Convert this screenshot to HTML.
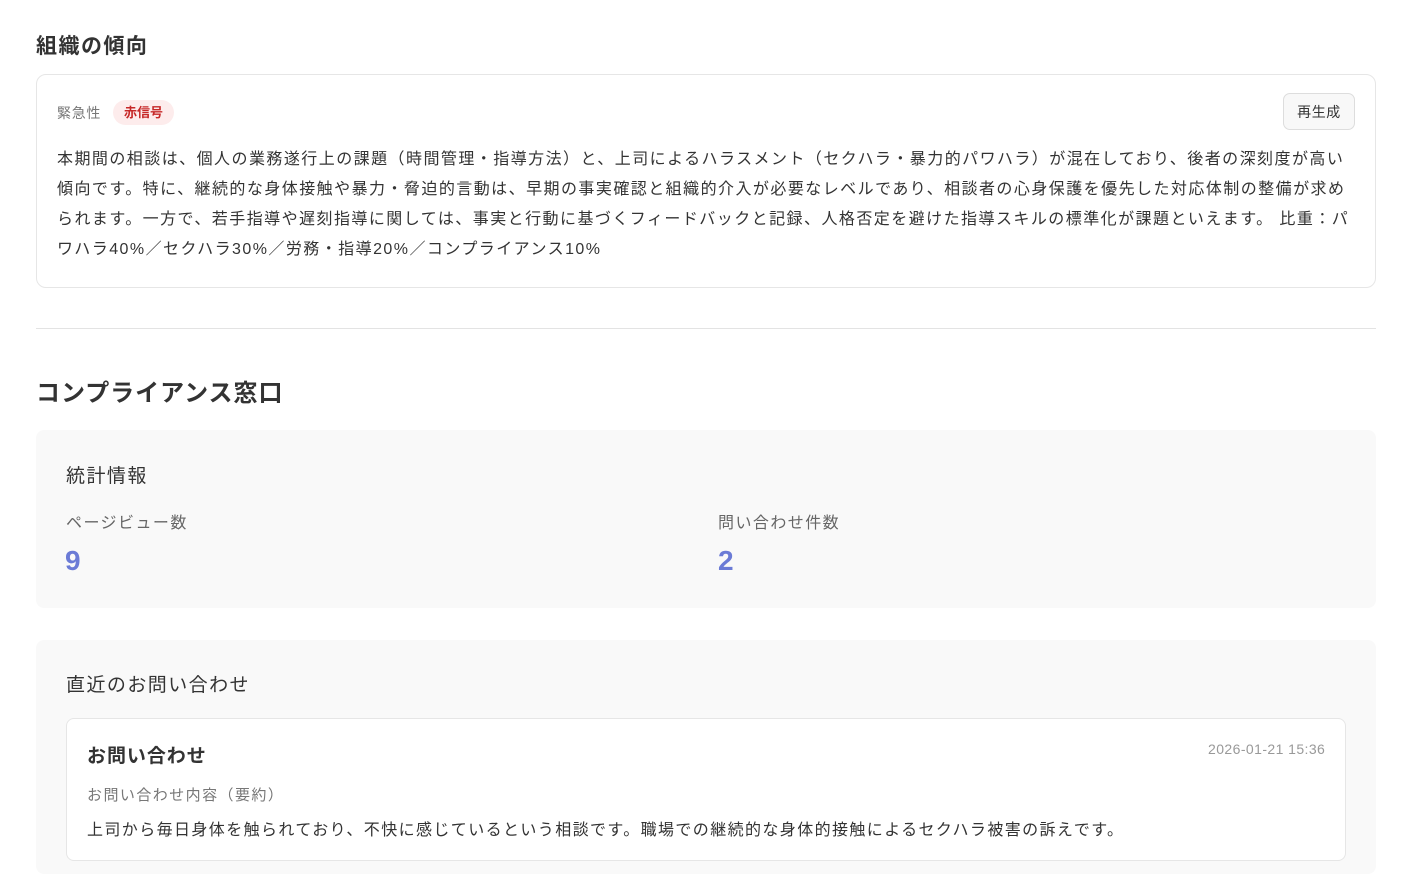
<!DOCTYPE html>
<html><head><meta charset="utf-8"><style>
*{box-sizing:border-box;margin:0;padding:0}
body{width:1406px;height:874px;overflow:hidden;background:#fff;font-family:"Liberation Sans","Noto Sans CJK JP",sans-serif;color:#333;position:relative;letter-spacing:0.09em}
.abs{position:absolute}
h2{font-size:22px;font-weight:700;color:#333}
</style></head><body>
<h2 class="abs" style="left:36px;top:30px;font-size:21px;letter-spacing:0.07em">組織の傾向</h2>
<div class="abs" style="left:36px;top:74px;width:1340px;height:214px;border:1px solid #e6e6e6;border-radius:10px"></div>
<div class="abs" style="left:57px;top:103px;font-size:14px;color:#777;letter-spacing:0.05em">緊急性</div>
<div class="abs" style="left:113px;top:100px;width:61px;height:25px;border-radius:13px;background:#fdecec;color:#c62828;font-size:13px;font-weight:700;text-align:center;line-height:25px;letter-spacing:0">赤信号</div>
<div class="abs" style="left:1283px;top:93px;width:72px;height:37px;border:1px solid #ddd;border-radius:7px;background:#f8f8f8;font-size:14px;color:#333;text-align:center;line-height:37px;letter-spacing:0.04em">再生成</div>
<div class="abs" style="left:57px;top:145px;width:1320px;font-size:16px;line-height:30px;color:#333;white-space:nowrap;letter-spacing:1.45px">本期間の相談は、個人の業務遂行上の課題（時間管理・指導方法）と、上司によるハラスメント（セクハラ・暴力的パワハラ）が混在しており、後者の深刻度が高い<br>傾向です。特に、継続的な身体接触や暴力・脅迫的言動は、早期の事実確認と組織的介入が必要なレベルであり、相談者の心身保護を優先した対応体制の整備が求め<br>られます。一方で、若手指導や遅刻指導に関しては、事実と行動に基づくフィードバックと記録、人格否定を避けた指導スキルの標準化が課題といえます。 比重：パ<br>ワハラ40%／セクハラ30%／労務・指導20%／コンプライアンス10%</div>
<div class="abs" style="left:36px;top:328px;width:1340px;height:1px;background:#e3e3e3"></div>
<h2 class="abs" style="left:36px;top:373px;font-size:24px;letter-spacing:0.04em">コンプライアンス窓口</h2>
<div class="abs" style="left:36px;top:430px;width:1340px;height:178px;background:#f9f9f9;border-radius:8px"></div>
<div class="abs" style="left:66px;top:461px;font-size:19px;color:#333">統計情報</div>
<div class="abs" style="left:66px;top:509px;font-size:16px;color:#666">ページビュー数</div>
<div class="abs" style="left:65px;top:545px;font-size:28px;font-weight:700;color:#6b7bd6">9</div>
<div class="abs" style="left:718px;top:509px;font-size:16px;color:#666">問い合わせ件数</div>
<div class="abs" style="left:718px;top:545px;font-size:28px;font-weight:700;color:#6b7bd6">2</div>
<div class="abs" style="left:36px;top:640px;width:1340px;height:234px;background:#f9f9f9;border-radius:8px"></div>
<div class="abs" style="left:66px;top:670px;font-size:19px;color:#333">直近のお問い合わせ</div>
<div class="abs" style="left:66px;top:718px;width:1280px;height:143px;background:#fff;border:1px solid #e6e6e6;border-radius:8px"></div>
<div class="abs" style="left:87px;top:741px;font-size:19px;font-weight:700;color:#333;letter-spacing:0.05em">お問い合わせ</div>
<div class="abs" style="left:1208px;top:741px;font-size:14px;color:#999;letter-spacing:0.03em">2026-01-21 15:36</div>
<div class="abs" style="left:87px;top:784px;font-size:15px;color:#777">お問い合わせ内容（要約）</div>
<div class="abs" style="left:87px;top:816px;font-size:16px;color:#333;letter-spacing:1.4px">上司から毎日身体を触られており、不快に感じているという相談です。職場での継続的な身体的接触によるセクハラ被害の訴えです。</div>
</body></html>
